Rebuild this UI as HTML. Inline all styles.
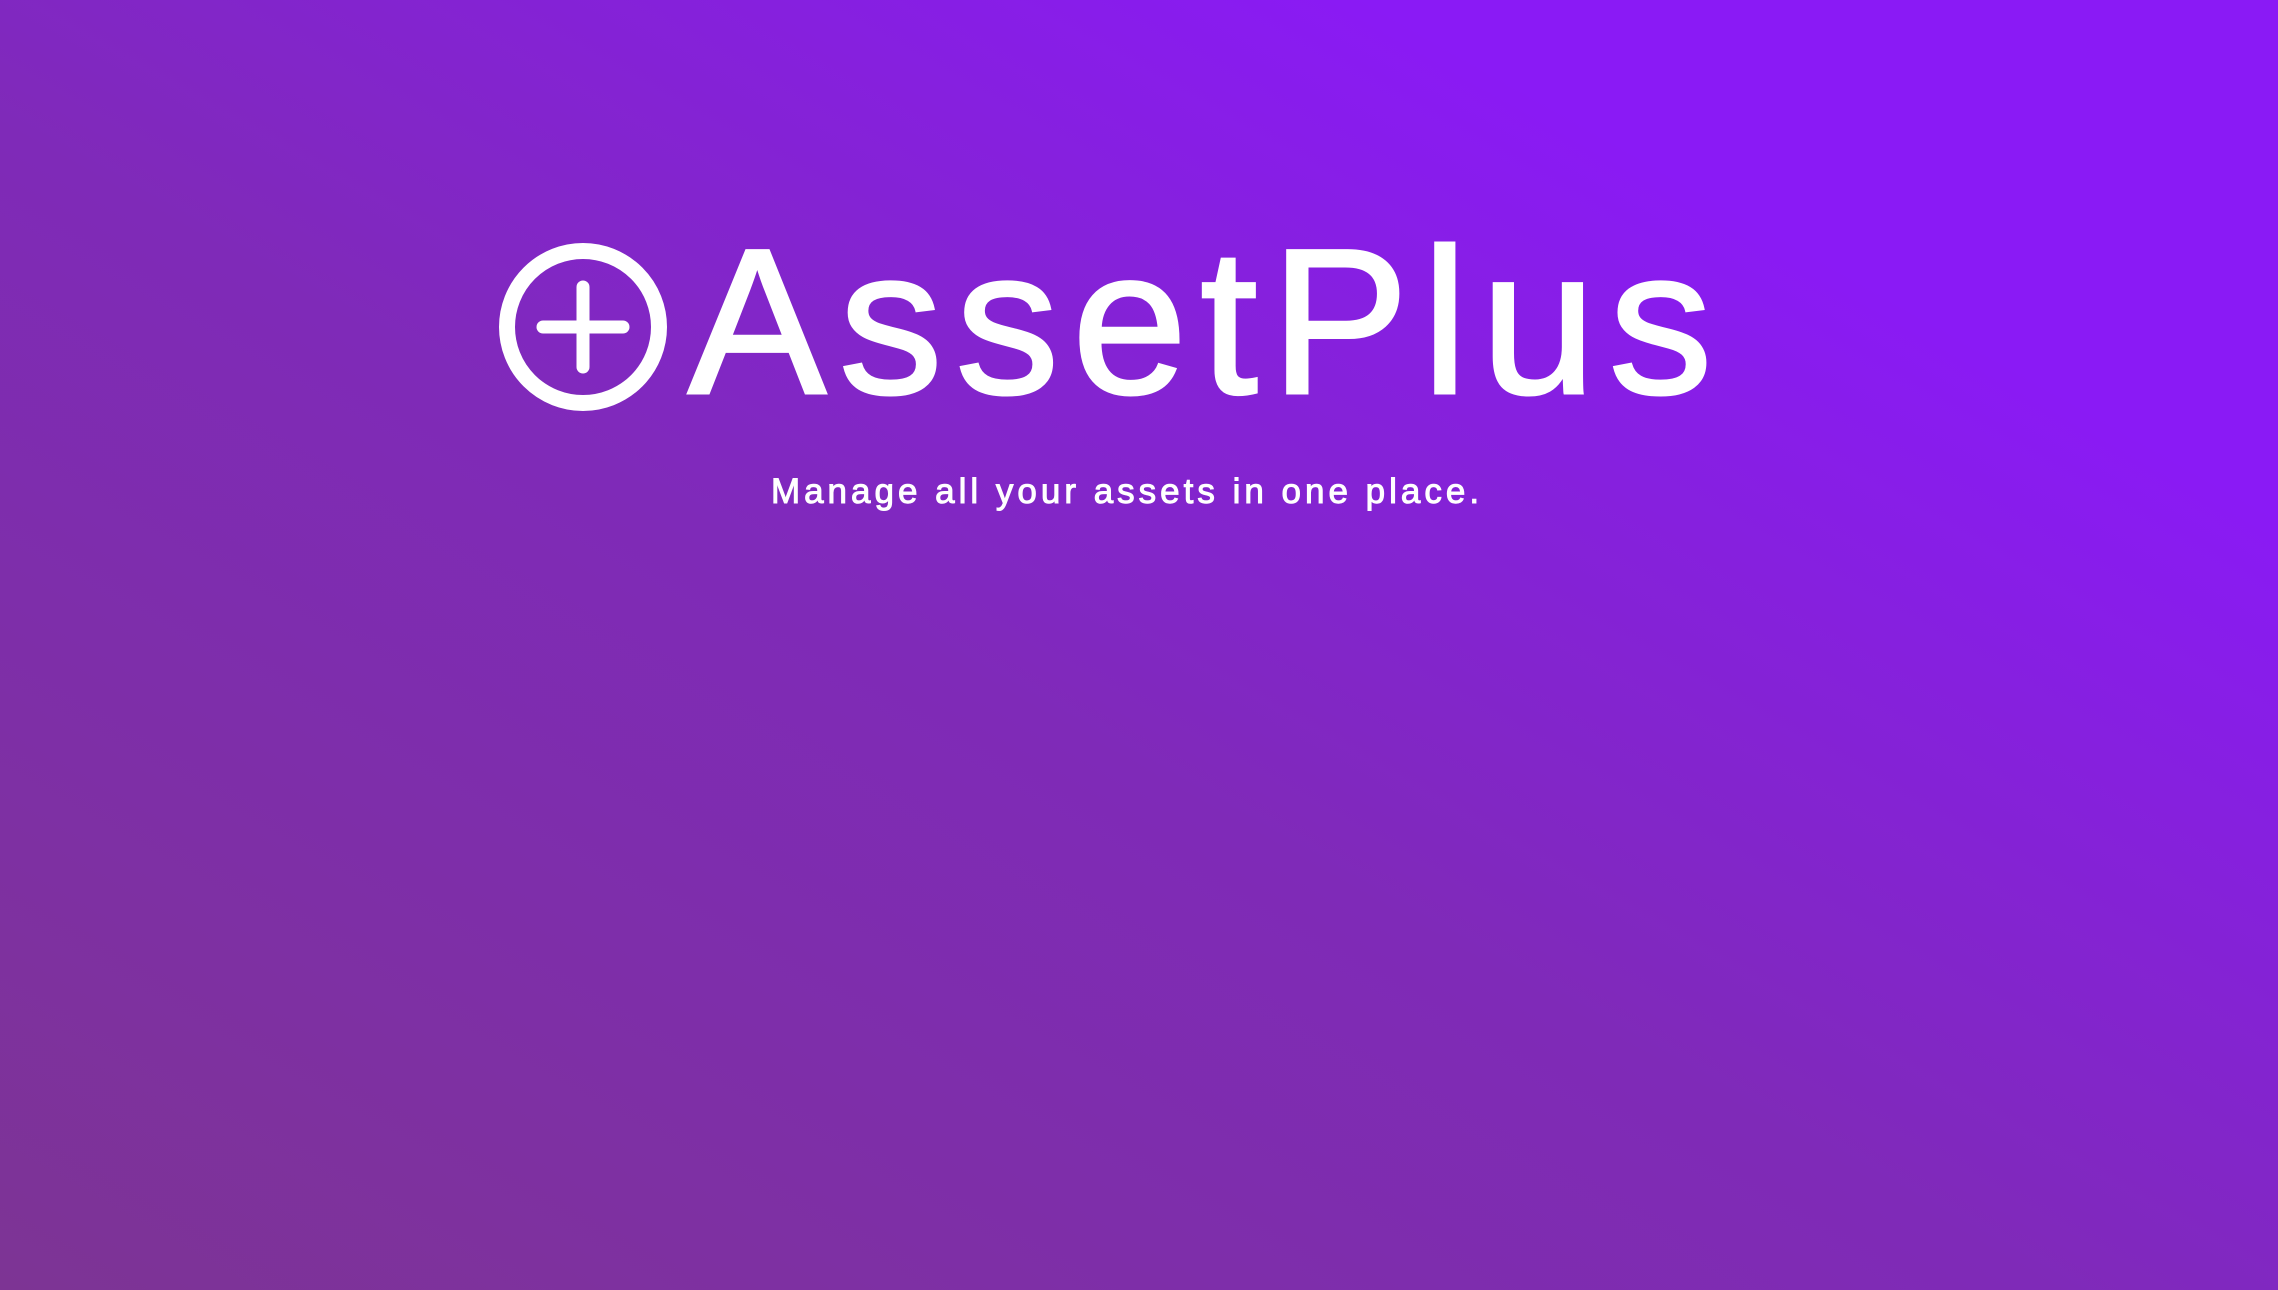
<!DOCTYPE html>
<html><head><meta charset="utf-8"><style>
html,body{margin:0;padding:0;width:2278px;height:1290px;overflow:hidden}
body{background:linear-gradient(to top right,#7d3494 0%,#7f2ab8 45%,#8a1af5 80%,#8a1af5 100%);position:relative;font-family:"Liberation Sans",sans-serif;color:#fff}
.title{position:absolute;left:688px;top:0;height:394px;width:1100px}
.title span{position:absolute;left:0;bottom:-31px;font-size:207px;line-height:1;letter-spacing:13px;display:block;-webkit-text-stroke:3px #fff}
.tag{position:absolute;left:0;width:2254px;text-align:center;top:474px;font-size:35px;letter-spacing:4px;line-height:1;-webkit-text-stroke:1px #fff}
</style></head><body>
<svg style="position:absolute;left:0;top:0" width="2278" height="1290">
<circle cx="583" cy="327" r="76" fill="none" stroke="#fff" stroke-width="16"/>
<line x1="583" y1="287" x2="583" y2="367" stroke="#fff" stroke-width="13" stroke-linecap="round"/>
<line x1="543" y1="327" x2="623" y2="327" stroke="#fff" stroke-width="13" stroke-linecap="round"/>
</svg>
<div class="title"><span>AssetPlus</span></div>
<div class="tag">Manage all your assets in one place.</div>
</body></html>
